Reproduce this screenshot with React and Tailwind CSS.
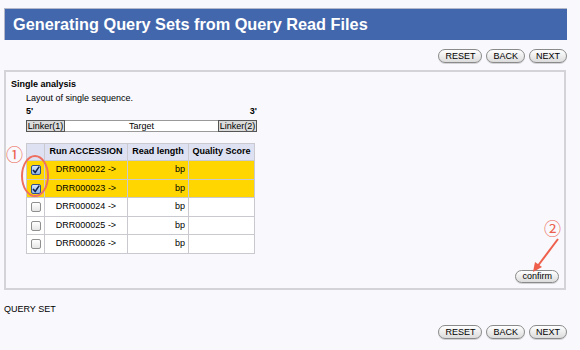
import React from 'react'

const ROWS = [
  { id: 'DRR000022', checked: true },
  { id: 'DRR000023', checked: true },
  { id: 'DRR000024', checked: false },
  { id: 'DRR000025', checked: false },
  { id: 'DRR000026', checked: false },
]

function Pill({ children }) {
  return (
    <button className="h-[14px] px-[6px] rounded-full border border-[#8a8a8a] bg-gradient-to-b from-white to-[#dcdcdc] text-[9px] leading-[12px] text-black shadow-[0_1px_0_rgba(0,0,0,0.15)]">
      {children}
    </button>
  )
}

function NavButtons() {
  return (
    <div className="flex justify-end gap-[4px] pr-[13px]">
      <Pill>RESET</Pill>
      <Pill>BACK</Pill>
      <Pill>NEXT</Pill>
    </div>
  )
}

function Check({ on }) {
  if (on) {
    return (
      <span className="inline-flex w-[10px] h-[10px] rounded-[2px] border border-[#2f4f8f] bg-gradient-to-b from-[#d6e6fb] to-[#8fb4e6] items-center justify-center">
        <svg width="8" height="8" viewBox="0 0 8 8">
          <path d="M1 4 L3.2 6.4 L7.2 0.6" fill="none" stroke="#12244a" strokeWidth="1.6" />
        </svg>
      </span>
    )
  }
  return <span className="inline-block w-[10px] h-[10px] rounded-[2px] border border-[#8f8f8f] bg-gradient-to-b from-white to-[#e6e6e6]" />
}

export default function App() {
  return (
    <div className="w-[580px] h-[350px] bg-[#f8f8fd] text-black overflow-hidden" style={{ fontFamily: '"Liberation Sans", Arial, sans-serif' }}>
      {/* header */}
      <div className="ml-[4px] mr-[13px] mt-[8px] h-[32px] bg-[#4267ad] border-t border-l border-[#b4b8c8] flex items-center pl-[8px]">
        <h1 className="text-white font-bold text-[16.3px] leading-none">Generating Query Sets from Query Read Files</h1>
      </div>

      <div className="mt-[9px]">
        <NavButtons />
      </div>

      {/* panel */}
      <div className="relative ml-[4px] mr-[14px] mt-[7px] h-[220px] border-2 border-[#d4d4d8] flex flex-col">
        <div className="pl-[5px] pt-[7px] text-[9px] leading-[11px] font-bold">Single analysis</div>
        <div className="ml-[20px] mt-[3px] text-[9px] leading-[11px]">Layout of single sequence.</div>

        <div className="ml-[20px] w-[231px] mt-[2px] flex justify-between text-[9px] leading-[11px] font-bold">
          <span>5'</span>
          <span>3'</span>
        </div>

        <div className="ml-[20px] w-[231px] mt-[3px] h-[12px] flex text-[9px] leading-[10px]">
          <div className="w-[39px] border border-[#555] bg-[#dadada] flex items-center justify-center">Linker(1)</div>
          <div className="flex-1 border-y border-[#999] bg-white flex items-center justify-center">Target</div>
          <div className="w-[39px] border border-[#555] bg-[#dadada] flex items-center justify-center">Linker(2)</div>
        </div>

        <table className="ml-[20px] mt-[11px] w-[228px] border-collapse text-[9px] table-fixed">
          <colgroup>
            <col className="w-[18px]" />
            <col className="w-[83px]" />
            <col className="w-[61px]" />
            <col className="w-[66px]" />
          </colgroup>
          <thead>
            <tr className="h-[17px] bg-[#dde1f2] font-bold">
              <th className="border border-[#c9c9cf]"></th>
              <th className="border border-[#c9c9cf] text-center">Run ACCESSION</th>
              <th className="border border-[#c9c9cf] text-center">Read length</th>
              <th className="border border-[#c9c9cf] text-center">Quality Score</th>
            </tr>
          </thead>
          <tbody>
            {ROWS.map(r => (
              <tr key={r.id} className={`h-[18.6px] ${r.checked ? 'bg-[#ffd600]' : 'bg-white'}`}>
                <td className="border border-[#c9c9cf] text-center align-middle leading-none pt-[2px]"><Check on={r.checked} /></td>
                <td className="border border-[#c9c9cf] text-center">{r.id} -&gt;</td>
                <td className="border border-[#c9c9cf] text-right pr-[3px]">bp</td>
                <td className="border border-[#c9c9cf]"></td>
              </tr>
            ))}
          </tbody>
        </table>

        <div className="flex-1" />
        <div className="flex justify-end pr-[5px] pb-[5px]">
          <button className="h-[13px] px-[6px] rounded-full border border-[#8a8a8a] bg-gradient-to-b from-white to-[#dcdcdc] text-[9px] leading-[11px] text-black shadow-[0_1px_0_rgba(0,0,0,0.15)]">confirm</button>
        </div>

        {/* annotations */}
        <span className="absolute left-[0px] top-[73px] text-[17px] leading-none text-[#ec5f4c]" style={{ fontFamily: '"Noto Sans CJK JP", sans-serif' }}>①</span>
        <div className="absolute left-[15px] top-[83px] w-[28px] h-[42px] rounded-[50%] border-2 border-[#ee6f5f]" />
        <span className="absolute left-[538px] top-[147px] text-[17px] leading-none text-[#ec5f4c]" style={{ fontFamily: '"Noto Sans CJK JP", sans-serif' }}>②</span>
        <svg className="absolute left-[521px] top-[165px]" width="40" height="38" viewBox="0 0 40 38">
          <line x1="31" y1="2" x2="10" y2="30" stroke="#ee5f4c" strokeWidth="2" />
          <polygon points="6,35 8,25 15,30" fill="#ee5f4c" />
        </svg>
      </div>

      <div className="ml-[4px] mt-[14px] text-[9px] leading-[11px]">QUERY SET</div>

      <div className="mt-[10px]">
        <NavButtons />
      </div>
    </div>
  )
}
